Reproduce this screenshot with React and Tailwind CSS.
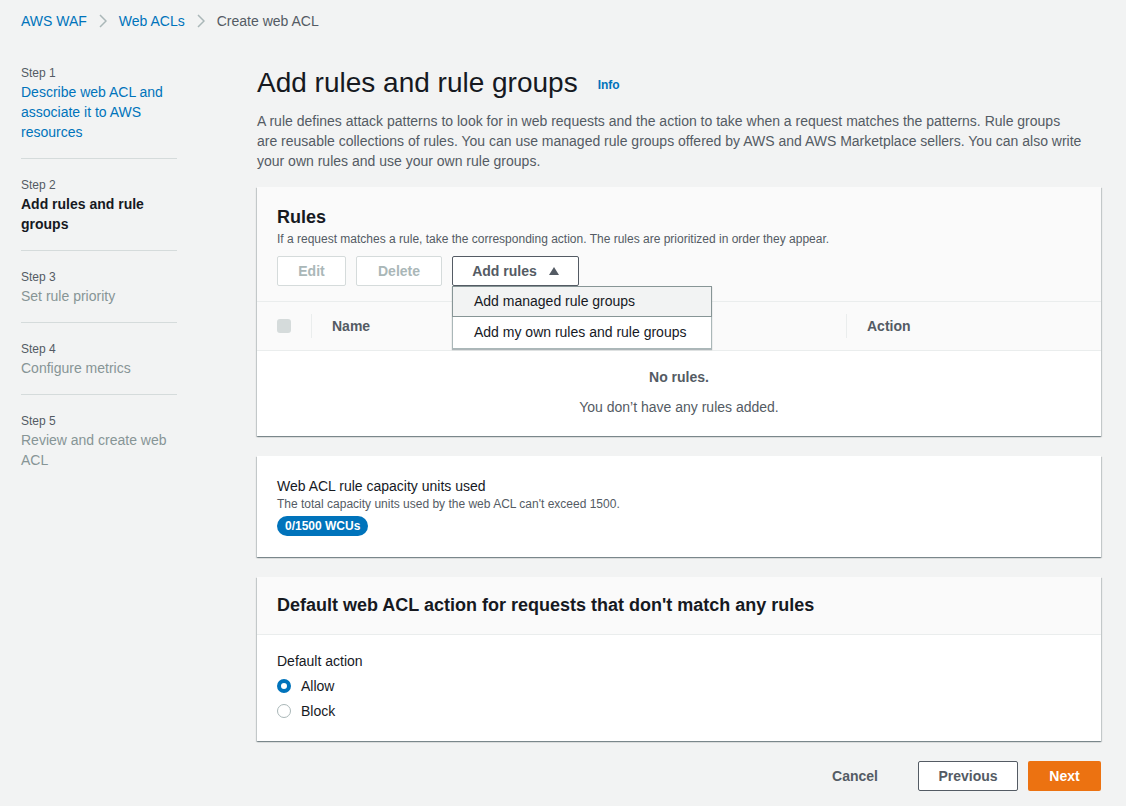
import React from 'react';

// steps in the left wizard nav
const steps = [
  { label: "Step 1", lines: ["Describe web ACL and", "associate it to AWS", "resources"], state: "done" },
  { label: "Step 2", lines: ["Add rules and rule", "groups"], state: "current" },
  { label: "Step 3", lines: ["Set rule priority"], state: "todo" },
  { label: "Step 4", lines: ["Configure metrics"], state: "todo" },
  { label: "Step 5", lines: ["Review and create web", "ACL"], state: "todo" },
];

const card = "bg-white shadow-[0_1px_1px_0_rgba(0,28,36,0.3),1px_1px_1px_0_rgba(0,28,36,0.15),-1px_1px_1px_0_rgba(0,28,36,0.15)]";

function StepNav() {
  return (
    <nav className="w-[156px] shrink-0 pt-[22px]">
      {steps.map((s, i) => (
        <div key={s.label} className={i < steps.length - 1 ? "border-b border-[#d5dbdb] pb-[16px] mb-[17px]" : ""}>
          <div className="text-[12px] leading-[18px] text-[#545b64]">{s.label}</div>
          <div
            className={
              "text-[14px] leading-[20px] " +
              (s.state === "done" ? "text-[#0073bb]" : s.state === "current" ? "font-bold text-[#16191f]" : "text-[#879596]")
            }
          >
            {s.lines.map((l) => (
              <div key={l}>{l}</div>
            ))}
          </div>
        </div>
      ))}
    </nav>
  );
}

function RulesCard() {
  return (
    <div className={card + " relative"}>
      <div className="bg-[#fafafa] px-5 pt-[18px] pb-[15px]">
        <h2 className="text-[18px] leading-[24px] font-bold text-[#16191f]">Rules</h2>
        <p className="mt-[2px] text-[12px] leading-[16px] text-[#545b64]">
          If a request matches a rule, take the corresponding action. The rules are prioritized in order they appear.
        </p>
        <div className="flex gap-[10px] mt-[9px]">
          <button className="h-[30px] w-[69px] border border-[#d5dbdb] rounded-[2px] bg-white text-[14px] font-bold text-[#aab7b8]">Edit</button>
          <button className="h-[30px] w-[86px] border border-[#d5dbdb] rounded-[2px] bg-white text-[14px] font-bold text-[#aab7b8]">Delete</button>
          <div className="relative">
            <button className="h-[30px] w-[127px] border border-[#545b64] rounded-[2px] bg-white text-[14px] font-bold text-[#545b64] flex items-center justify-center gap-[12px]">
              Add rules
              <svg width="10" height="8" viewBox="0 0 10 8"><path d="M5 0 L10 8 L0 8 Z" fill="#545b64" /></svg>
            </button>
            <div className="absolute left-0 top-[30px] w-[260px] bg-white border border-[#aab7b8] shadow-[0_1px_1px_0_rgba(0,28,36,0.3)] z-10 text-[14px] text-[#16191f]">
              <div className="h-[31px] bg-[#f2f3f3] border border-[#879596] -m-px mb-0 px-[21px] flex items-center">Add managed rule groups</div>
              <div className="h-[31px] px-[21px] flex items-center">Add my own rules and rule groups</div>
            </div>
          </div>
        </div>
      </div>
      <div className="bg-[#fafafa] border-y border-[#eaeded] h-[50px] flex items-center text-[14px] font-bold text-[#545b64]">
        <div className="pl-5 pr-5 flex items-center">
          <span className="w-[14px] h-[14px] rounded-[3px] bg-[#d5dbdb] inline-block" />
        </div>
        <div className="h-[24px] border-l border-[#eaeded] pl-5 flex items-center w-[535px]">Name</div>
        <div className="h-[24px] border-l border-[#eaeded] pl-5 flex items-center">Action</div>
      </div>
      <div className="h-[85px] flex flex-col items-center pt-[16px] text-[14px] leading-[20px] text-[#545b64]">
        <div className="font-bold">No rules.</div>
        <div className="mt-[10px]">You don’t have any rules added.</div>
      </div>
    </div>
  );
}

function CapacityCard() {
  return (
    <div className={card + " px-5 pt-[21px] pb-[20px]"}>
      <div className="text-[14px] leading-[18px] text-[#16191f]">Web ACL rule capacity units used</div>
      <div className="text-[12px] leading-[18px] text-[#545b64]">The total capacity units used by the web ACL can't exceed 1500.</div>
      <span className="inline-block mt-[3px] h-[20px] leading-[20px] px-2 rounded-full bg-[#0073bb] text-white text-[12px] font-bold">0/1500 WCUs</span>
    </div>
  );
}

function DefaultActionCard() {
  return (
    <div className={card}>
      <div className="bg-[#fafafa] border-b border-[#eaeded] h-[58px] px-5 flex items-center">
        <h2 className="text-[18px] font-bold text-[#16191f]">Default web ACL action for requests that don't match any rules</h2>
      </div>
      <div className="px-5 pt-[16px] pb-[20px] text-[14px] leading-[20px] text-[#16191f]">
        <div>Default action</div>
        <div className="flex items-center gap-[10px] mt-[5px]">
          <span className="w-[14px] h-[14px] rounded-full border-[4px] border-[#0073bb] bg-white inline-block" />
          Allow
        </div>
        <div className="flex items-center gap-[10px] mt-[5px]">
          <span className="w-[14px] h-[14px] rounded-full border border-[#aab7b8] bg-white inline-block" />
          Block
        </div>
      </div>
    </div>
  );
}

export default function App() {
  return (
    <div className="min-h-screen bg-[#f2f3f3] font-['Liberation_Sans',Arial,sans-serif] text-[#16191f]">
      <div className="h-[42px] px-[21px] flex items-center gap-[12px] text-[14px]">
        <span className="text-[#0073bb]">AWS WAF</span>
        <svg width="8" height="14" viewBox="0 0 8 14"><path d="M1 1 L7 7 L1 13" stroke="#aab7b8" strokeWidth="1.5" fill="none" /></svg>
        <span className="text-[#0073bb]">Web ACLs</span>
        <svg width="8" height="14" viewBox="0 0 8 14"><path d="M1 1 L7 7 L1 13" stroke="#aab7b8" strokeWidth="1.5" fill="none" /></svg>
        <span className="text-[#545b64]">Create web ACL</span>
      </div>
      <div className="flex pl-[21px] pr-[25px] gap-[80px]">
        <StepNav />
        <main className="flex-1 pt-[23px] pb-[14px]">
          <div className="flex items-baseline gap-[20px]">
            <h1 className="text-[28px] leading-[36px] text-[#16191f]">Add rules and rule groups</h1>
            <span className="text-[12px] font-bold text-[#0073bb] relative top-[-3px]">Info</span>
          </div>
          <p className="mt-[10px] text-[14px] leading-[20px] text-[#545b64]">
            A rule defines attack patterns to look for in web requests and the action to take when a request matches the patterns. Rule groups<br />
            are reusable collections of rules. You can use managed rule groups offered by AWS and AWS Marketplace sellers. You can also write<br />
            your own rules and use your own rule groups.
          </p>
          <div className="mt-[16px] flex flex-col gap-[20px]">
            <RulesCard />
            <CapacityCard />
            <DefaultActionCard />
          </div>
          <div className="flex justify-end items-center mt-[20px] gap-[10px] text-[14px] font-bold">
            <button className="h-[30px] px-5 text-[#545b64] mr-[10px]">Cancel</button>
            <button className="h-[30px] w-[100px] border border-[#545b64] rounded-[2px] bg-white text-[#545b64]">Previous</button>
            <button className="h-[30px] w-[73px] rounded-[2px] bg-[#ec7211] text-white">Next</button>
          </div>
        </main>
      </div>
    </div>
  );
}
